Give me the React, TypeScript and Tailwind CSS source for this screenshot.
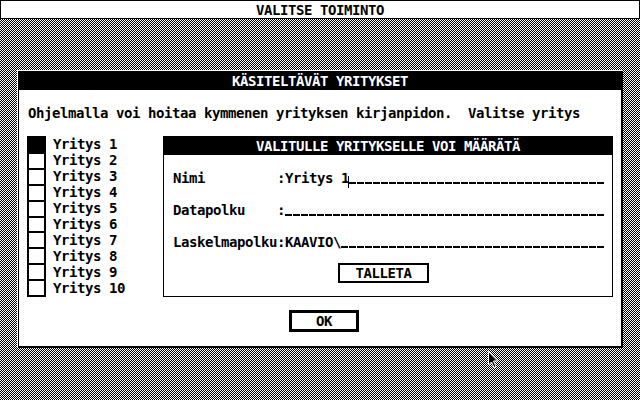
/**
 * GEM-tyylinen dialogi: käsiteltävät yritykset
 */

const companies = Array.from({ length: 10 }, (_, i) => `Yritys ${i + 1}`);

const fields = [
  { label: "Nimi", value: "Yritys 1", cursor: true },
  { label: "Datapolku", value: "", cursor: false },
  { label: "Laskelmapolku", value: "KAAVIO\\", cursor: false },
];

function Field({ value, cursor }: { value: string; cursor: boolean }) {
  return (
    <div className="flex h-4 w-[320px]">
      {value && <span className="whitespace-pre">{value}</span>}
      {cursor && <span className="-ml-px mt-[6px] h-[12px] w-px self-start bg-black" />}
      <span className="mb-[2px] h-[2px] flex-1 self-end bg-[repeating-linear-gradient(90deg,#000_0_7px,transparent_7px_8px)]" />
    </div>
  );
}

function Pointer() {
  return (
    <svg className="absolute top-[350px] left-[486px]" width="14" height="20" viewBox="0 0 14 20">
      <path d="M2.5 1.5 L2.5 15 L5.5 12 L8 17.5 L10 16.5 L7.5 11 L11.5 11 Z" fill="#000" stroke="#fff" strokeWidth="1" />
    </svg>
  );
}

export default function App() {
  return (
    <div className="relative h-[400px] w-[640px] overflow-hidden bg-[length:2px_2px] bg-[repeating-conic-gradient(#000_0_25%,#fff_0_50%)] font-['DejaVu_Sans_Mono',monospace] font-bold text-[14px] text-black leading-4 tracking-[-0.43px]">
      <div className="flex h-[19px] items-center justify-center border border-black bg-white">
        VALITSE TOIMINTO
      </div>

      <div className="mt-[51px] ml-[17px] flex h-[278px] w-[606px] border-white border-t border-l">
        <div className="flex flex-1 flex-col border-black border-t border-r-2 border-b-2 border-l bg-white">
          <div className="flex h-[18px] items-center justify-center bg-black text-white">
            KÄSITELTÄVÄT YRITYKSET
          </div>

          <p className="mt-[15px] pl-[9px] whitespace-pre">
            Ohjelmalla voi hoitaa kymmenen yrityksen kirjanpidon.  Valitse yritys
          </p>

          <div className="mt-[15px] flex pl-[8px]">
            <div className="flex w-[136px]">
              <div className="flex h-[161px] w-[19px] flex-col border-2 border-black">
                {companies.map((c, i) => (
                  <div
                    className={`flex-1 ${i > 0 ? "border-black border-t-2" : ""} ${i === 0 ? "bg-black" : ""}`}
                    key={c}
                  />
                ))}
              </div>
              <div className="ml-[7px] flex flex-col">
                {companies.map((c) => (
                  <span className="h-4 whitespace-pre" key={c}>
                    {c}
                  </span>
                ))}
              </div>
            </div>

            <div className="flex h-[161px] w-[450px] flex-col border border-black">
              <div className="flex h-[18px] items-center justify-center bg-black text-white">
                VALITULLE YRITYKSELLE VOI MÄÄRÄTÄ
              </div>
              <div className="flex flex-col gap-4 pt-[15px] pl-[9px]">
                {fields.map((f) => (
                  <div className="flex h-4" key={f.label}>
                    <span className="w-[104px] whitespace-pre">{f.label}</span>
                    <span className="w-[8px]">:</span>
                    <Field cursor={f.cursor} value={f.value} />
                  </div>
                ))}
              </div>
              <div className="mt-[13px] ml-[174px] flex h-5 w-[91px] items-center justify-center border-2 border-black">
                TALLETA
              </div>
            </div>
          </div>

          <div className="mt-[13px] ml-[270px] flex h-[22px] w-[70px] items-center justify-center border-[3px] border-black">
            OK
          </div>
        </div>
      </div>

      <Pointer />
    </div>
  );
}
